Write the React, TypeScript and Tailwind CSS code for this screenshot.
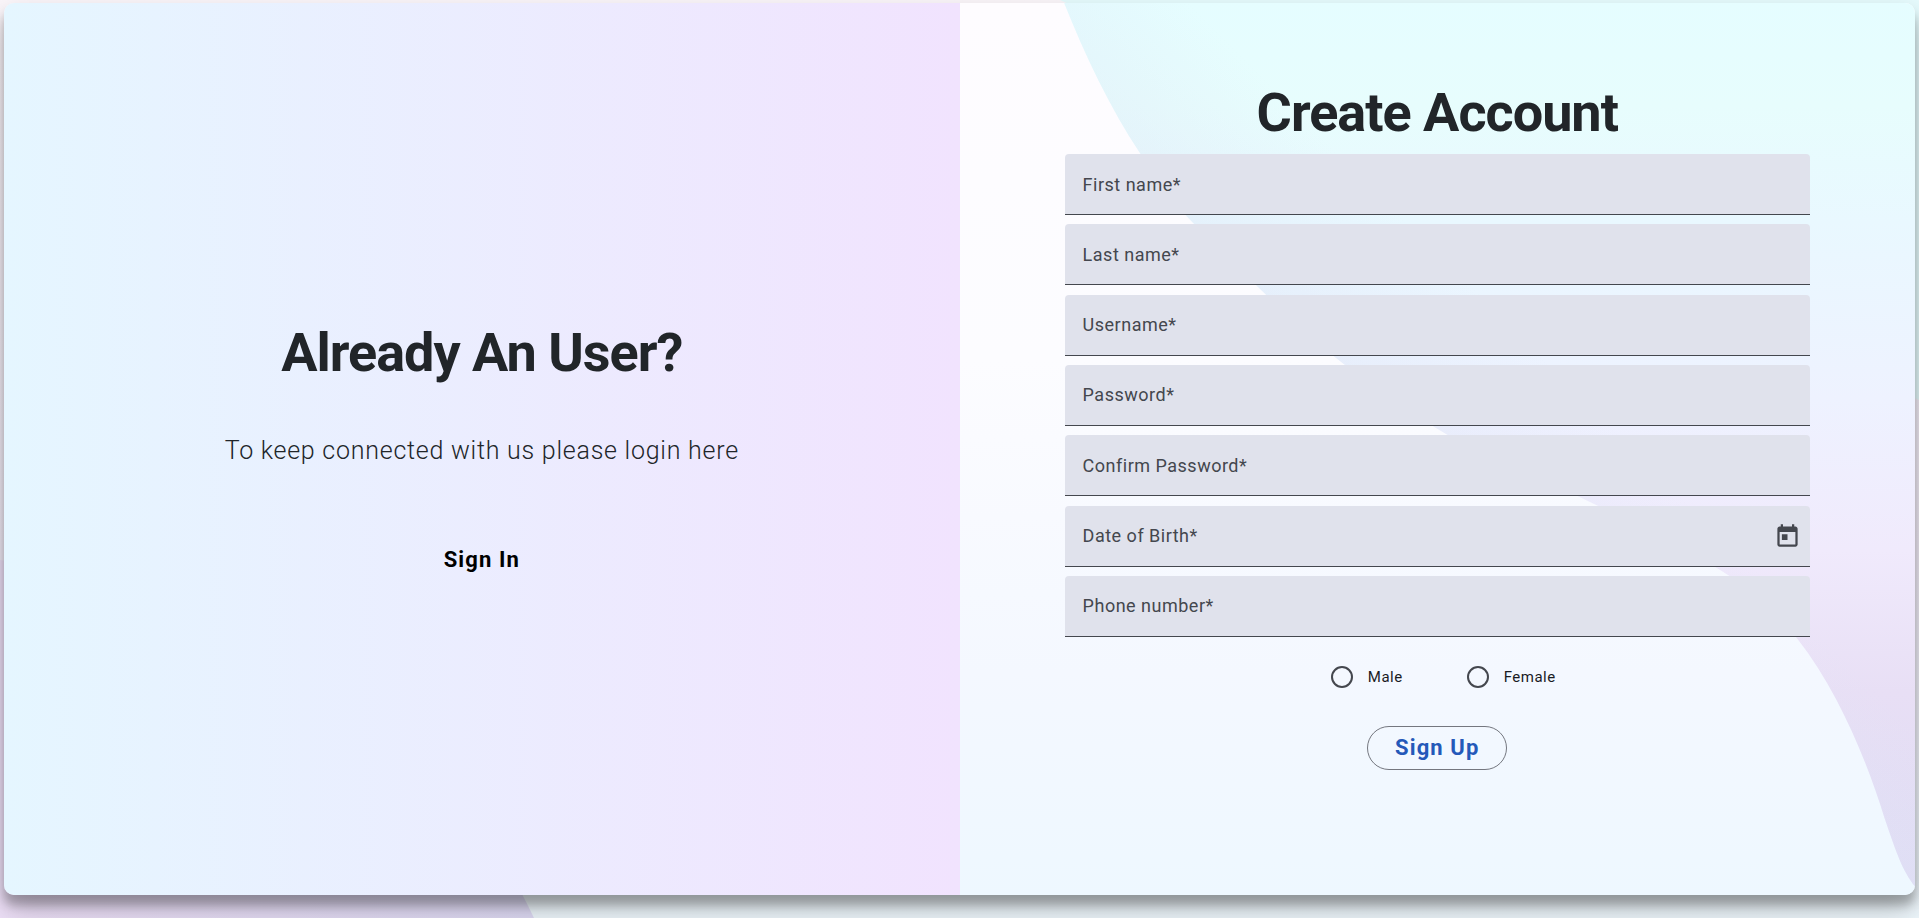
import React from "react";

const fields = [
  { id: "firstName", label: "First name", type: "text" },
  { id: "lastName", label: "Last name", type: "text" },
  { id: "username", label: "Username", type: "text" },
  { id: "password", label: "Password", type: "password" },
  { id: "confirmPassword", label: "Confirm Password", type: "password" },
  { id: "dob", label: "Date of Birth", type: "text", calendar: true },
  { id: "phone", label: "Phone number", type: "tel" },
];

const curve =
  "M103 -3 C124 50 150 105 180 150 C205 190 225 213 243 229 C282 269 330 316 375 354 C415 385 442 405 478 426 C520 452 566 472 618 493 C664 515 714 540 754 563 C792 585 817 610 838 636 C880 690 908 760 925 815 C937 850 943 868 956 884 V-3 Z";

function Field({ id, label, type, calendar }: { id: string; label: string; type: string; calendar?: boolean }) {
  return (
    <div className="flex h-[61px] items-center rounded-t border-b border-[#44474e] bg-[#e0e2ec] pt-px pr-2 pl-[18px]">
      <label htmlFor={id} className="shrink-0 text-lg tracking-[0.5px] text-[#44474e]">
        {label}*
      </label>
      <input id={id} type={type} required className="h-full min-w-0 flex-1 bg-transparent pl-2 text-lg outline-none" />
      {calendar && (
        <button type="button" aria-label="Open calendar" className="flex size-7 items-center justify-center text-[#44474e]">
          <svg viewBox="0 0 24 24" className="size-[27px]" fill="currentColor">
            <path d="M19 3h-1V1h-2v2H8V1H6v2H5c-1.11 0-1.99.9-1.99 2L3 19c0 1.1.89 2 2 2h14c1.1 0 2-.9 2-2V5c0-1.1-.9-2-2-2zm0 16H5V8h14v11zM7 10h5v5H7z" />
          </svg>
        </button>
      )}
    </div>
  );
}

function Radio({ id, label }: { id: string; label: string }) {
  return (
    <label htmlFor={id} className="flex items-center gap-[15px] text-[15px] tracking-[0.5px] text-[#1a1b1f]">
      <input
        id={id}
        type="radio"
        name="gender"
        className="size-[22px] appearance-none rounded-full border-2 border-[#44474e] checked:border-[7px]"
      />
      {label}
    </label>
  );
}

function PanelBackdrop() {
  return (
    <svg viewBox="0 0 956 892" preserveAspectRatio="none" aria-hidden="true" className="absolute inset-0 -z-10 h-full w-full">
      <defs>
        <linearGradient id="base" x1="0" y1="0" x2="0" y2="1">
          <stop offset="0" stopColor="#fefcff" />
          <stop offset="0.4" stopColor="#fcfcff" />
          <stop offset="0.75" stopColor="#f4f8ff" />
          <stop offset="1" stopColor="#eef8ff" />
        </linearGradient>
        <linearGradient id="wave" x1="0" y1="0" x2="0" y2="1">
          <stop offset="0" stopColor="#e5fdff" />
          <stop offset="0.12" stopColor="#e7fdfd" />
          <stop offset="0.25" stopColor="#e9f8ff" />
          <stop offset="0.45" stopColor="#eef2ff" />
          <stop offset="0.62" stopColor="#f0eafc" />
          <stop offset="0.78" stopColor="#e8dff5" />
          <stop offset="1" stopColor="#dfdbf4" />
        </linearGradient>
        <linearGradient id="edge" gradientUnits="userSpaceOnUse" x1="240" y1="330" x2="400" y2="170">
          <stop offset="0" stopColor="#dfe7f6" stopOpacity="0.6" />
          <stop offset="1" stopColor="#dfe7f6" stopOpacity="0" />
        </linearGradient>
      </defs>
      <rect width="956" height="892" fill="url(#base)" />
      <path d={curve} fill="url(#wave)" />
      <path d={curve} fill="url(#edge)" />
    </svg>
  );
}

export default function App() {
  return (
    <div className="relative isolate flex min-h-screen flex-col overflow-hidden bg-[#eef4fb] px-1 pt-[3px] pb-[23px] font-[Roboto,sans-serif]">
      <svg viewBox="0 0 1919 918" preserveAspectRatio="none" aria-hidden="true" className="absolute inset-0 -z-10 h-full w-full">
        <defs>
          <linearGradient id="page" x1="0" y1="0" x2="0" y2="1">
            <stop offset="0" stopColor="#fbf6fa" />
            <stop offset="0.6" stopColor="#f2ecf8" />
            <stop offset="1" stopColor="#eef7fc" />
          </linearGradient>
          <linearGradient id="corner" x1="0" y1="0" x2="1" y2="0">
            <stop offset="0" stopColor="#eee0f8" />
            <stop offset="1" stopColor="#dedaf4" />
          </linearGradient>
        </defs>
        <rect width="1919" height="918" fill="url(#page)" />
        <path d="M1060 0 H1919 V400 Z" fill="#e6fbfd" />
        <path d="M0 560 C300 600 460 760 534 918 H0 Z" fill="url(#corner)" />
      </svg>
      <main className="grid flex-1 grid-cols-2 overflow-hidden rounded-[10px] shadow-[0_14px_28px_rgba(0,0,0,0.25),0_10px_10px_rgba(0,0,0,0.22)]">
        <section className="flex flex-col items-center justify-center bg-linear-to-r from-[#e5f6ff] to-[#f1e3fe] pt-1">
          <h1 className="text-[54px] leading-[64px] font-bold tracking-[-1px] text-[#212529]">Already An User?</h1>
          <p className="mt-12 text-[25px] leading-[36px] font-light tracking-[0.03em] text-[#212529]">
            To keep connected with us please login here
          </p>
          <button type="button" className="mt-[69px] text-[22px] leading-[44px] font-bold tracking-wider text-black">
            Sign In
          </button>
        </section>
        <section className="relative isolate flex flex-col items-center">
          <PanelBackdrop />
          <form className="flex w-[78%] flex-col pt-[78px]">
            <h1 className="text-center text-[54px] leading-[64px] font-bold tracking-[-1px] text-[#212529]">Create Account</h1>
            <div className="mt-[9px] flex h-[483px] flex-col justify-between">
              {fields.map((f) => (
                <Field key={f.id} {...f} />
              ))}
            </div>
            <div className="mt-[29px] flex justify-center gap-16 pl-3">
              <Radio id="male" label="Male" />
              <Radio id="female" label="Female" />
            </div>
            <button
              type="submit"
              className="mt-[37px] h-11 w-[140px] self-center rounded-full border border-[#74777f] text-[22px] font-bold tracking-wider text-[#2459b9]"
            >
              Sign Up
            </button>
          </form>
        </section>
      </main>
    </div>
  );
}
